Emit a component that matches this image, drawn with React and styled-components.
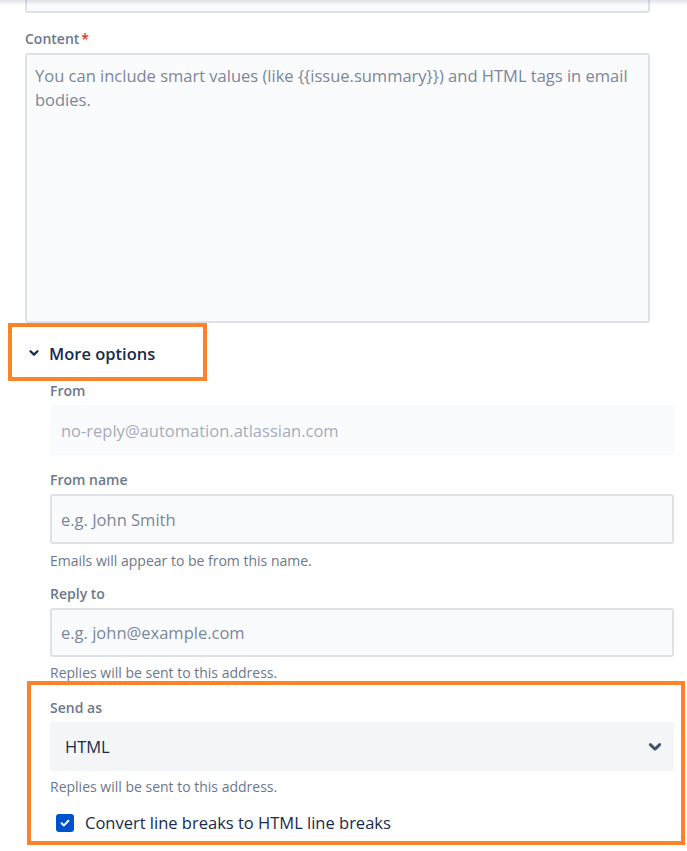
import React from "react";
import styled, { createGlobalStyle } from "styled-components";

const Global = createGlobalStyle`
  html, body { margin: 0; padding: 0; background: #fff; }
  body { font-family: "Open Sans", "Noto Sans", sans-serif; color: #172b4d; }
  * { box-sizing: border-box; }
`;

const Page = styled.div`
  position: relative;
  width: 687px;
  height: 851px;
  overflow: hidden;
`;

const TopShadow = styled.div`
  position: absolute;
  left: 0;
  top: 0;
  right: 0;
  height: 5px;
  background: linear-gradient(to bottom, rgba(9, 30, 66, 0.13), rgba(9, 30, 66, 0));
  pointer-events: none;
`;

const Form = styled.div`
  display: flex;
  flex-direction: column;
  margin-top: -37px;
`;

const MainFields = styled.div`
  display: flex;
  flex-direction: column;
  padding-left: 25px;
  width: 650px;
`;

const Input = styled.div`
  height: ${(p) => p.$h || 50}px;
  border: 2px solid #dfe1e6;
  border-radius: 3px;
  background: #fafbfc;
  padding: 0 9px;
  display: flex;
  align-items: center;
  font-size: 16.5px;
  color: ${(p) => (p.$value ? "#172b4d" : "#7a869a")};
  white-space: nowrap;
  overflow: hidden;
`;

const Label = styled.div`
  font-size: 14px;
  font-weight: 600;
  color: #6b778c;
  line-height: 16px;
  margin: ${(p) => p.$top || 18}px 0 6px;
  display: flex;
  gap: 2px;
`;

const Required = styled.span`
  color: #de350b;
`;

const TextArea = styled.div`
  height: 270px;
  border: 2px solid #dfe1e6;
  border-radius: 3px;
  background: #fafbfc;
  padding: 9px 8px;
  font-size: 16.5px;
  line-height: 24px;
  color: #7a869a;
`;

const Highlight = styled.div`
  border: 4px solid #fe8228;
  display: flex;
  flex-direction: column;
`;

const MoreOptionsBox = styled(Highlight)`
  margin-left: 8px;
  width: 199px;
  height: 58px;
  margin-top: 0;
  flex-direction: row;
  align-items: center;
  padding-left: 16px;
  padding-top: 2px;
  gap: 9px;
`;

const MoreTitle = styled.span`
  font-size: 16.5px;
  font-weight: 600;
  color: #172b4d;
`;

const Options = styled.div`
  display: flex;
  flex-direction: column;
  padding-left: 50px;
  width: 674px;
`;

const Disabled = styled(Input)`
  border-color: transparent;
  background: #fafbfc;
  color: #a5adba;
`;

const Helper = styled.div`
  font-size: 14px;
  color: #6b778c;
  line-height: 16px;
  margin-top: ${(p) => p.$top || 9}px;
`;

const SendBox = styled(Highlight)`
  margin-left: 27px;
  width: 658px;
  height: 164px;
  margin-top: 0;
  padding: 0 7px 0 19px;
`;

const Select = styled.div`
  height: 49px;
  border-radius: 3px;
  background: #f4f5f7;
  display: flex;
  align-items: center;
  justify-content: space-between;
  padding: 0 11px 0 15px;
  font-size: 16.5px;
  color: #172b4d;
`;

const CheckRow = styled.label`
  display: flex;
  align-items: center;
  gap: 11px;
  margin-top: 16px;
  padding-left: 6px;
  font-size: 16.5px;
  color: #172b4d;
`;

const Box = styled.span`
  width: 18px;
  height: 18px;
  border-radius: 3px;
  background: #0052cc;
  display: flex;
  align-items: center;
  justify-content: center;
`;

const Chevron = ({ size = 12, color = "#172b4d" }) => (
  <svg width={size} height={size} viewBox="0 0 12 12">
    <path d="M2.5 4.2 L6 7.6 L9.5 4.2" fill="none" stroke={color} strokeWidth="2.2" strokeLinecap="round" strokeLinejoin="round" />
  </svg>
);

const subject = "Issue {{issue.key}} has been updated by {{initiator.displayName}}";
const contentHint = "You can include smart values (like {{issue.summary}}) and HTML tags in email bodies.";

export default function App() {
  return (
    <Page>
      <Global />
      <Form>
        <MainFields>
          <Input $value>{subject}</Input>
          <Label $top={18}>
            Content<Required>*</Required>
          </Label>
          <TextArea>{contentHint}</TextArea>
        </MainFields>
        <MoreOptionsBox>
          <Chevron size={12} />
          <MoreTitle>More options</MoreTitle>
        </MoreOptionsBox>
        <Options>
          <Label $top={2}>From</Label>
          <Disabled>no-reply@automation.atlassian.com</Disabled>
          <Label $top={17}>From name</Label>
          <Input>e.g. John Smith</Input>
          <Helper>Emails will appear to be from this name.</Helper>
          <Label $top={17}>Reply to</Label>
          <Input $h={49}>e.g. john@example.com</Input>
          <Helper $top={8}>Replies will be sent to this address.</Helper>
        </Options>
        <SendBox>
          <Label $top={15}>Send as</Label>
          <Select>
            HTML
            <Chevron size={16} color="#42526e" />
          </Select>
          <Helper $top={8}>Replies will be sent to this address.</Helper>
          <CheckRow>
            <Box>
              <svg width="12" height="12" viewBox="0 0 12 12">
                <path d="M2.6 6.2 L5 8.4 L9.4 3.8" fill="none" stroke="#fff" strokeWidth="2" strokeLinecap="round" strokeLinejoin="round" />
              </svg>
            </Box>
            Convert line breaks to HTML line breaks
          </CheckRow>
        </SendBox>
      </Form>
      <TopShadow />
    </Page>
  );
}
